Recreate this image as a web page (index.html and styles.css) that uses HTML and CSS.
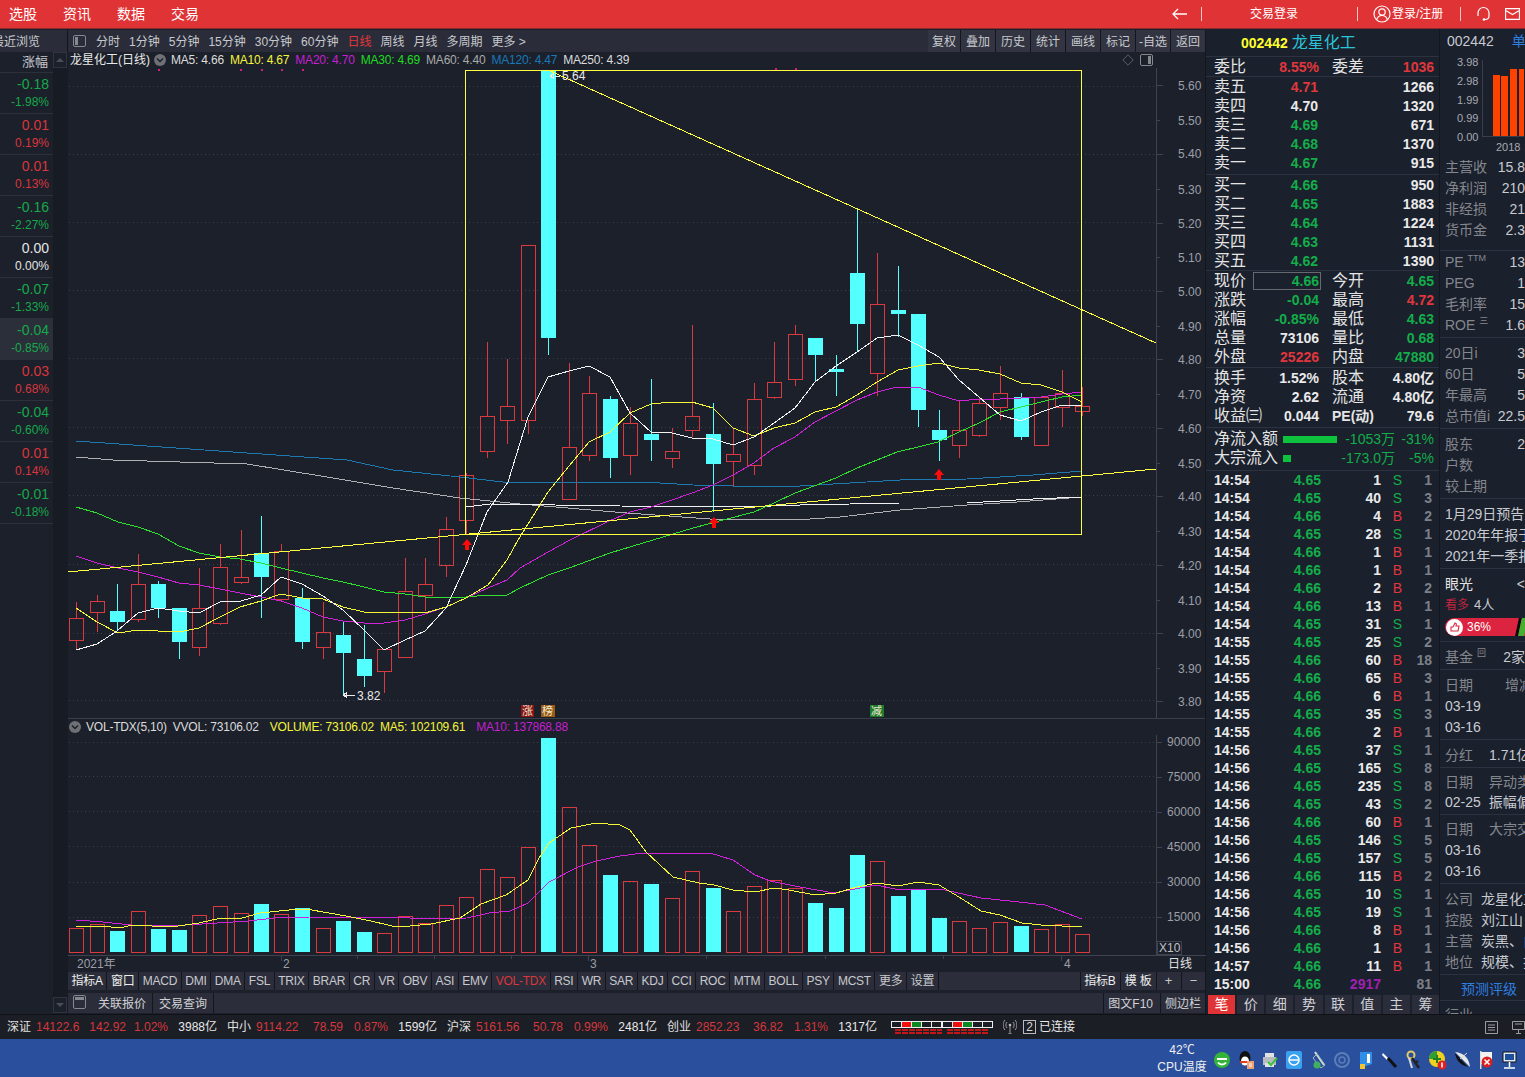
FILE: index.html
```html
<!DOCTYPE html>
<html lang="zh-CN">
<head>
<meta charset="utf-8">
<title>龙星化工</title>
<link rel="stylesheet" href="styles.css">
</head>
<body>
<header class="topbar">
  <nav class="topnav"><span>选股</span><span>资讯</span><span>数据</span><span>交易</span></nav>
  <div class="topright">
    <svg class="ico-back" viewBox="0 0 15 12"><path d="M15 6H1M6 1L1 6l5 5" fill="none" stroke="#fff" stroke-width="1.3"/></svg>
    <i class="tsep sep1"></i>
    <span class="trade">交易登录</span>
    <i class="tsep sep2"></i>
    <svg class="ico-user" viewBox="0 0 18 18"><circle cx="9" cy="9" r="8" fill="none" stroke="#fff" stroke-width="1.2"/><circle cx="9" cy="7" r="3.2" fill="none" stroke="#fff" stroke-width="1.2"/><path d="M3.5 15c1-3.5 3-4.500 5.500-4.500s4.500 1 5.500 4.500" fill="none" stroke="#fff" stroke-width="1.2"/></svg>
    <span class="login">登录/注册</span>
    <i class="tsep sep3"></i>
    <svg class="ico-head" viewBox="0 0 15 16"><path d="M2 10V7a5.500 5.500 0 0 1 11 0v3c0 2.500-2 3.500-4 3.500" fill="none" stroke="#fff" stroke-width="1.2"/><circle cx="8" cy="13.500" r="1.300" fill="#fff"/></svg>
    <svg class="ico-mail" viewBox="0 0 15 12"><path d="M.6.600h13.800v10.800H.6zM.6 2.500l6.900 4 6.900-4" fill="none" stroke="#fff" stroke-width="1.1"/></svg>
  </div>
</header>

<main class="workspace">
  <aside class="recent">
    <div class="recent-title"><span>最近浏览</span></div>
    <div class="recent-body">
      <div class="rank">
        <div class="rank-head">涨幅</div>
        <div class="rank-row down"><b>-0.18</b><small>-1.98%</small></div>
        <div class="rank-row up"><b>0.01</b><small>0.19%</small></div>
        <div class="rank-row up"><b>0.01</b><small>0.13%</small></div>
        <div class="rank-row down"><b>-0.16</b><small>-2.27%</small></div>
        <div class="rank-row flat"><b>0.00</b><small>0.00%</small></div>
        <div class="rank-row down"><b>-0.07</b><small>-1.33%</small></div>
        <div class="rank-row down current"><b>-0.04</b><small>-0.85%</small></div>
        <div class="rank-row up"><b>0.03</b><small>0.68%</small></div>
        <div class="rank-row down"><b>-0.04</b><small>-0.60%</small></div>
        <div class="rank-row up"><b>0.01</b><small>0.14%</small></div>
        <div class="rank-row down"><b>-0.01</b><small>-0.18%</small></div>
      </div>
      <div class="scroll">
        <div class="scroll-btn"><i class="tri-up"></i></div>
        <div class="scroll-btn"><i class="tri-down"></i></div>
      </div>
    </div>
  </aside>

  <section class="center">
    <div class="toolbar">
      <svg class="ico-toggle" viewBox="0 0 13 12"><rect x=".5" y=".5" width="12" height="11" rx="1.500" fill="none" stroke="#85888f"/><rect x="2" y="2" width="3" height="8" fill="#85888f"/></svg>
      <div class="periods">
        <span>分时</span><span>1分钟</span><span>5分钟</span><span>15分钟</span><span>30分钟</span><span>60分钟</span><span class="active">日线</span><span>周线</span><span>月线</span><span>多周期</span><span>更多 &gt;</span>
      </div>
      <div class="tools">
        <span>复权</span><span>叠加</span><span>历史</span><span>统计</span><span>画线</span><span>标记</span><span>-自选</span><span>返回</span>
      </div>
    </div>

    <div class="legend legend-main">
      <span class="stock-name">龙星化工(日线)</span>
      <svg class="chev" viewBox="0 0 12 12"><circle cx="6" cy="6" r="6" fill="#6e7075"/><path d="M3 4.500l3 3 3-3" fill="none" stroke="#1b202b" stroke-width="1.500"/></svg>
      <span class="c-w">MA5: 4.66</span><span class="c-y">MA10: 4.67</span><span class="c-m">MA20: 4.70</span><span class="c-g">MA30: 4.69</span><span class="c-s">MA60: 4.40</span><span class="c-b">MA120: 4.47</span><span class="c-w">MA250: 4.39</span>
      <span class="legend-icons">
        <svg class="ico-dia" viewBox="0 0 12 12"><path d="M6 .8L11.200 6 6 11.200.8 6z" fill="none" stroke="#5b5e66"/></svg>
        <svg class="ico-side" viewBox="0 0 13 12"><rect x=".5" y=".5" width="12" height="11" rx="1.500" fill="none" stroke="#85888f"/><rect x="8" y="2" width="3" height="8" fill="#85888f"/></svg>
      </span>
    </div>

    <svg class="pane-main" viewBox="68 68 1138 650" aria-label="K线图">
      <g class="grid">
        <path d="M69 86H1156M69 154H1156M69 222H1156M69 290H1156M69 358H1156M69 427H1156M69 495H1156M69 564H1156M69 633H1156M69 700H1156"/>
      </g>
      <path class="sep" d="M1156.500 52V718"/>
      <path class="tick" d="M1156 85h7M1156 120h4M1156 154h7M1156 189h4M1156 223h7M1156 257h4M1156 291h7M1156 326h4M1156 359h7M1156 394h4M1156 428h7M1156 463h4M1156 496h7M1156 531h4M1156 565h7M1156 600h4M1156 633h7M1156 668h4M1156 701h7"/>
      <g class="axis">
        <text x="1178" y="90">5.60</text><text x="1178" y="125">5.50</text><text x="1178" y="158">5.40</text><text x="1178" y="194">5.30</text><text x="1178" y="228">5.20</text><text x="1178" y="262">5.10</text><text x="1178" y="296">5.00</text><text x="1178" y="331">4.90</text><text x="1178" y="364">4.80</text><text x="1178" y="399">4.70</text><text x="1178" y="433">4.60</text><text x="1178" y="468">4.50</text><text x="1178" y="501">4.40</text><text x="1178" y="536">4.30</text><text x="1178" y="570">4.20</text><text x="1178" y="605">4.10</text><text x="1178" y="638">4.00</text><text x="1178" y="673">3.90</text><text x="1178" y="706">3.80</text>
      </g>
      <path class="dots" d="M158 69h2v2h-2zM240 69h2v2h-2zM261 69h2v2h-2zM281 69h2v2h-2zM302 69h2v2h-2zM775 68h2v2h-2zM795 68h2v2h-2z"/>
      <path class="cand-red" d="M76.500 602V618M76.500 640V650M69.500 618h14V640h-14zM97.500 595V601M97.500 612V632M90.500 601h14V612h-14zM138.500 554V584M138.500 619V622M131.500 584h14V619h-14zM199.500 568V608M199.500 647V656M192.500 608h14V647h-14zM220.500 544V567M220.500 623V625M213.500 567h14V623h-14zM241.500 530V577M241.500 582V584M234.500 577h14V582h-14zM281.500 544V551M281.500 599V602M274.500 551h14V599h-14zM323.500 602V632M323.500 647V659M316.500 632h14V647h-14zM384.500 671V693M377.500 649h14V671h-14zM405.500 558V591M398.500 591h14V657h-14zM425.500 558V584M425.500 595V611M418.500 584h14V595h-14zM446.500 517V529M446.500 565V577M439.500 529h14V565h-14zM466.500 473V475M466.500 520V534M459.500 475h14V520h-14zM487.500 342V416M487.500 451V458M480.500 416h14V451h-14zM507.500 359V406M507.500 420V444M500.500 406h14V420h-14zM528.500 420V434M521.500 245h14V420h-14zM569.500 363V447M562.500 447h14V499h-14zM589.500 376V393M589.500 455V461M582.500 393h14V455h-14zM630.500 407V423M630.500 455V475M623.500 423h14V455h-14zM672.500 428V451M672.500 458V468M665.500 451h14V458h-14zM692.500 325V416M692.500 430V437M685.500 416h14V430h-14zM733.500 428V454M733.500 461V487M726.500 454h14V461h-14zM754.500 383V399M754.500 465V475M747.500 399h14V465h-14zM774.500 342V382M774.500 397V399M767.500 382h14V397h-14zM795.500 325V334M795.500 379V386M788.500 334h14V379h-14zM877.500 253V304M877.500 373V396M870.500 304h14V373h-14zM959.500 401V430M959.500 445V458M952.500 430h14V445h-14zM979.500 397V403M979.500 435V437M972.500 403h14V435h-14zM1000.500 366V393M1000.500 407V420M993.500 393h14V407h-14zM1034.500 397h14V445h-14zM1062.500 370V393M1062.500 407V427M1055.500 393h14V407h-14zM1082.500 387V406M1082.500 411V416M1075.500 406h14V411h-14z"/>
      <path class="wick-cyan" d="M117.500 584V630M158.500 581V618M179.500 642V659M261.500 516V618M302.500 588V649M343.500 622V696M364.500 625V687M548.500 338V355M610.500 396V478M651.500 379V461M713.500 403V512M815.500 355V382M836.500 355V396M857.500 210V351M898.500 266V337M918.500 410V427M939.500 410V461M1021.500 393V440"/>
      <path class="body-cyan" d="M110 611h15v11h-15zM151 584h15v24h-15zM172 608h15v34h-15zM254 553h15v24h-15zM295 598h15v44h-15zM336 635h15v18h-15zM357 659h15v17h-15zM541 70h15v268h-15zM603 399h15v59h-15zM644 434h15v6h-15zM706 434h15v30h-15zM808 338h15v17h-15zM829 369h15v3h-15zM850 273h15v51h-15zM891 310h15v4h-15zM911 314h15v96h-15zM932 430h15v10h-15zM1014 397h15v40h-15z"/>
      <g class="lines">
        <polyline class="l-blue" points="76,441 347,460 393,470 460,477 503,482 600,482 660,483 693,485 733,486 800,486 900,480 967,479 1033,475 1082,471"/>
        <polyline class="l-grey" points="76,457 113,460 247,464 327,477 393,488 460,498 520,504 627,513 710,519 810,519 840,517 900,510 967,505 1017,502 1082,497"/>
        <polyline class="l-white" points="466,507 490,504 620,506 743,507 800,505 900,503 967,503 1033,499 1082,497"/>
        <polyline class="l-green" points="76,507 97,513 118,522 138,527 158,534 179,546 199,553 220,557 240,559 261,563 281,568 302,573 323,578 343,582 364,587 384,592 405,594 425,597 446,598 466,597 488,595 507,595 520,588 548,575 569,568 610,553 653,540 693,528 727,519 754,512 774,503 795,493 836,478 857,468 877,460 897,452 918,447 938,442 959,432 979,423 1000,412 1021,407 1041,402 1062,397 1082,395"/>
        <polyline class="l-mag" points="76,556 97,563 118,568 138,572 158,577 179,583 199,585 220,589 240,593 261,597 281,601 302,608 323,617 343,621 364,623 384,623 405,620 425,614 446,607 466,598 488,588 507,580 520,568 548,552 570,540 607,522 630,512 651,507 672,500 692,493 713,485 733,475 754,463 774,448 795,437 815,422 836,411 857,400 877,392 897,387 918,387 939,395 959,401 979,399 1000,399 1021,398 1041,397 1062,394 1082,392"/>
        <polyline class="l-yel" points="76,608 97,622 118,633 138,630 158,631 179,632 199,628 220,617 240,607 261,601 281,594 302,598 323,599 343,607 364,612 384,613 405,612 425,613 446,607 466,598 488,585 507,560 518,540 548,492 569,466 589,442 610,432 630,413 651,404 672,402 692,402 713,408 733,428 754,436 774,428 795,423 815,412 836,407 857,395 877,382 898,370 918,366 939,363 959,368 979,370 1000,374 1021,383 1041,385 1062,392 1082,402"/>
        <polyline class="l-white" points="76,650 97,644 117,631 138,613 158,608 179,611 199,613 220,602 241,601 261,595 281,577 302,584 323,596 343,610 364,630 384,650 405,640 425,631 446,608 466,565 487,512 508,482 528,417 548,377 569,371 589,366 610,377 630,413 651,432 672,433 692,438 713,439 733,445 754,437 774,423 795,408 815,382 836,366 857,352 877,338 898,335 918,345 939,357 959,380 979,397 1000,415 1021,421 1041,412 1062,405 1082,406"/>
        <path class="l-draw" d="M68 572L1156 469M548 70L1156 343M465.500 70.500H1081.500V534.500H465.500z"/>
      </g>
      <path class="arrow" d="M467 539l5 6h-3v5h-4v-5h-3zM714 517l5 6h-3v5h-4v-5h-3zM939 469l5 6h-3v5h-4v-5h-3z"/>
      <g class="marks">
        <path class="mark-line" d="M555 76h5M550 76l3-2v4zM343 695h12M343 695l3-2v4z"/>
        <text x="562" y="80">5.64</text>
        <text x="357" y="700">3.82</text>
      </g>
      <rect class="tag t-red" x="521" y="705" width="13" height="12"/><text class="tag-t" x="522" y="715">涨</text>
      <rect class="tag t-brown" x="541" y="705" width="14" height="12"/><text class="tag-t" x="542" y="715">榜</text>
      <rect class="tag t-green" x="870" y="705" width="14" height="12"/><text class="tag-t" x="871" y="715">减</text>
    </svg>

    <div class="legend legend-vol">
      <svg class="chev first" viewBox="0 0 12 12"><circle cx="6" cy="6" r="6" fill="#6e7075"/><path d="M3 4.500l3 3 3-3" fill="none" stroke="#1b202b" stroke-width="1.500"/></svg>
      <span class="c-w">VOL-TDX(5,10)</span><span class="c-w">VVOL: 73106.02</span><span class="c-y wide">VOLUME: 73106.02</span><span class="c-y">MA5: 102109.61</span><span class="c-m wide">MA10: 137868.88</span>
    </div>

    <svg class="pane-vol" viewBox="68 735 1138 236" aria-label="成交量图">
      <path class="grid-p" d="M69 742H1156M69 776H1156M69 811H1156M69 846H1156M69 882H1156M69 917H1156"/>
      <path class="sep" d="M1156.500 735V955M68 955.500H1206"/>
      <path class="tick" d="M1156 742h6M1156 777h6M1156 812h6M1156 847h6M1156 882h6M1156 917h6M281.500 955v6M357.500 955v4M434.500 955v4M511.500 955v4M588.500 955v6M706.500 955v4M825.500 955v4M943.500 955v4M1061.500 955v6"/>
      <g class="axis">
        <text x="1167" y="746">90000</text><text x="1167" y="781">75000</text><text x="1167" y="816">60000</text><text x="1167" y="851">45000</text><text x="1167" y="886">30000</text><text x="1167" y="921">15000</text>
        <text x="77" y="968">2021年</text><text x="283" y="968">2</text><text x="590" y="968">3</text><text x="1064" y="968">4</text>
        <text class="axis-w" x="1168" y="968">日线</text>
      </g>
      <rect class="x10" x="1157.500" y="941.500" width="24" height="13"/>
      <text class="axis-x" x="1159" y="952">X10</text>
      <path class="cand-red" d="M69.500 928h14V952h-14zM90.500 924h14V952h-14zM131.500 911h14V952h-14zM192.500 915h14V952h-14zM213.500 906h14V952h-14zM234.500 913h14V952h-14zM274.500 914h14V952h-14zM316.500 928h14V952h-14zM377.500 933h14V952h-14zM398.500 916h14V952h-14zM418.500 923h14V952h-14zM439.500 905h14V952h-14zM459.500 897h14V952h-14zM480.500 869h14V952h-14zM500.500 877h14V952h-14zM521.500 847h14V952h-14zM562.500 807h14V952h-14zM582.500 845h14V952h-14zM623.500 881h14V952h-14zM665.500 898h14V952h-14zM685.500 871h14V952h-14zM726.500 911h14V952h-14zM747.500 886h14V952h-14zM767.500 880h14V952h-14zM788.500 888h14V952h-14zM870.500 861h14V952h-14zM952.500 921h14V952h-14zM972.500 928h14V952h-14zM993.500 922h14V952h-14zM1034.500 929h14V952h-14zM1055.500 924h14V952h-14zM1075.500 934h14V952h-14z"/>
      <path class="body-cyan" d="M110 931h15V952h-15zM151 929h15V952h-15zM172 930h15V952h-15zM254 904h15V952h-15zM295 908h15V952h-15zM336 921h15V952h-15zM357 932h15V952h-15zM541 738h15V952h-15zM603 875h15V952h-15zM644 884h15V952h-15zM706 888h15V952h-15zM808 903h15V952h-15zM829 908h15V952h-15zM850 855h15V952h-15zM891 896h15V952h-15zM911 889h15V952h-15zM932 918h15V952h-15zM1014 926h15V952h-15z"/>
      <polyline class="l-mag" points="76,920 103,922 131,925 171,926 217,923 249,921 274,918 310,917 356,917 399,917 421,919 467,918 489,913 510,911 528,903 549,882 578,867 596,861 620,856 643,853 710,853 733,860 755,875 770,881 800,887 834,893 876,885 895,889 940,889 981,898 1019,902 1045,905 1082,919"/>
      <polyline class="l-yel" points="76,927 103,926 119,928 133,925 171,927 199,923 221,918 242,918 260,913 289,910 306,909 346,916 371,921 392,926 410,926 431,924 460,918 481,904 506,895 528,880 539,858 549,843 571,828 596,823 620,825 630,830 646,852 673,877 699,883 714,885 733,890 755,892 774,888 789,890 815,895 836,893 857,887 877,883 898,886 918,882 939,885 959,897 981,911 1000,915 1022,923 1041,925 1062,926 1082,927"/>
    </svg>

    <div class="ind-tabs">
      <span class="hl">指标A</span><span class="hl">窗口</span><span>MACD</span><span>DMI</span><span>DMA</span><span>FSL</span><span>TRIX</span><span>BRAR</span><span>CR</span><span>VR</span><span>OBV</span><span>ASI</span><span>EMV</span><span class="active">VOL-TDX</span><span>RSI</span><span>WR</span><span>SAR</span><span>KDJ</span><span>CCI</span><span>ROC</span><span>MTM</span><span>BOLL</span><span>PSY</span><span>MCST</span><span>更多</span><span>设置</span>
      <div class="ind-right"><span class="hl">指标B</span><span class="hl">模 板</span><span class="pm">+</span><span class="pm">−</span></div>
    </div>

    <div class="subtabs">
      <svg class="ico-toggle sm" viewBox="0 0 13 14"><rect x=".5" y=".5" width="12" height="13" rx="1.500" fill="none" stroke="#85888f"/><rect x="2" y="2" width="9" height="3" fill="#85888f"/></svg>
      <span class="sub">关联报价</span><span class="sub">交易查询</span>
      <div class="sub-right"><span class="sub">图文F10</span><span class="sub">侧边栏</span></div>
    </div>
  </section>

  <section class="quote">
    <div class="q-title"><b>002442</b><span>龙星化工</span></div>
    <div class="q-sec q-ratio">
      <div class="st"><span>委比</span><b class="r">8.55%</b><span class="l2">委差</span><b class="r">1036</b></div>
    </div>
    <div class="q-sec q-asks">
      <div class="bk"><span>卖五</span><b class="r">4.71</b><b>1266</b></div>
      <div class="bk"><span>卖四</span><b>4.70</b><b>1320</b></div>
      <div class="bk"><span>卖三</span><b class="g">4.69</b><b>671</b></div>
      <div class="bk"><span>卖二</span><b class="g">4.68</b><b>1370</b></div>
      <div class="bk"><span>卖一</span><b class="g">4.67</b><b>915</b></div>
    </div>
    <div class="q-sec">
      <div class="bk"><span>买一</span><b class="g">4.66</b><b>950</b></div>
      <div class="bk"><span>买二</span><b class="g">4.65</b><b>1883</b></div>
      <div class="bk"><span>买三</span><b class="g">4.64</b><b>1224</b></div>
      <div class="bk"><span>买四</span><b class="g">4.63</b><b>1131</b></div>
      <div class="bk"><span>买五</span><b class="g">4.62</b><b>1390</b></div>
    </div>
    <div class="q-sec q-stats">
      <div class="st"><span>现价</span><b class="g boxed">4.66</b><span class="l2">今开</span><b class="g">4.65</b></div>
      <div class="st"><span>涨跌</span><b class="g">-0.04</b><span class="l2">最高</span><b class="r">4.72</b></div>
      <div class="st"><span>涨幅</span><b class="g">-0.85%</b><span class="l2">最低</span><b class="g">4.63</b></div>
      <div class="st"><span>总量</span><b>73106</b><span class="l2">量比</span><b class="g">0.68</b></div>
      <div class="st"><span>外盘</span><b class="r">25226</b><span class="l2">内盘</span><b class="g">47880</b></div>
    </div>
    <div class="q-sec q-fund">
      <div class="st"><span>换手</span><b>1.52%</b><span class="l2">股本</span><b>4.80亿</b></div>
      <div class="st"><span>净资</span><b>2.62</b><span class="l2">流通</span><b>4.80亿</b></div>
      <div class="st"><span>收益㈢</span><b>0.044</b><span class="l2 pe">PE(动)</span><b>79.6</b></div>
    </div>
    <div class="q-sec q-flow">
      <div class="fl"><span>净流入额</span><i class="bar long"></i><em>-1053万</em><em>-31%</em></div>
      <div class="fl"><span>大宗流入</span><i class="bar short"></i><em>-173.0万</em><em>-5%</em></div>
    </div>
    <div class="ticks">
      <div class="tk"><b>14:54</b><b class="g">4.65</b><b>1</b><u class="g">S</u><s>1</s></div>
      <div class="tk"><b>14:54</b><b class="g">4.65</b><b>40</b><u class="g">S</u><s>3</s></div>
      <div class="tk"><b>14:54</b><b class="g">4.66</b><b>4</b><u class="r">B</u><s>2</s></div>
      <div class="tk"><b>14:54</b><b class="g">4.65</b><b>28</b><u class="g">S</u><s>1</s></div>
      <div class="tk"><b>14:54</b><b class="g">4.66</b><b>1</b><u class="r">B</u><s>1</s></div>
      <div class="tk"><b>14:54</b><b class="g">4.66</b><b>1</b><u class="r">B</u><s>1</s></div>
      <div class="tk"><b>14:54</b><b class="g">4.66</b><b>2</b><u class="r">B</u><s>2</s></div>
      <div class="tk"><b>14:54</b><b class="g">4.66</b><b>13</b><u class="r">B</u><s>1</s></div>
      <div class="tk"><b>14:54</b><b class="g">4.65</b><b>31</b><u class="g">S</u><s>1</s></div>
      <div class="tk"><b>14:55</b><b class="g">4.65</b><b>25</b><u class="g">S</u><s>2</s></div>
      <div class="tk"><b>14:55</b><b class="g">4.66</b><b>60</b><u class="r">B</u><s>18</s></div>
      <div class="tk"><b>14:55</b><b class="g">4.66</b><b>65</b><u class="r">B</u><s>3</s></div>
      <div class="tk"><b>14:55</b><b class="g">4.66</b><b>6</b><u class="r">B</u><s>1</s></div>
      <div class="tk"><b>14:55</b><b class="g">4.65</b><b>35</b><u class="g">S</u><s>3</s></div>
      <div class="tk"><b>14:55</b><b class="g">4.66</b><b>2</b><u class="r">B</u><s>1</s></div>
      <div class="tk"><b>14:56</b><b class="g">4.65</b><b>37</b><u class="g">S</u><s>1</s></div>
      <div class="tk"><b>14:56</b><b class="g">4.65</b><b>165</b><u class="g">S</u><s>8</s></div>
      <div class="tk"><b>14:56</b><b class="g">4.65</b><b>235</b><u class="g">S</u><s>8</s></div>
      <div class="tk"><b>14:56</b><b class="g">4.65</b><b>43</b><u class="g">S</u><s>2</s></div>
      <div class="tk"><b>14:56</b><b class="g">4.66</b><b>60</b><u class="r">B</u><s>1</s></div>
      <div class="tk"><b>14:56</b><b class="g">4.65</b><b>146</b><u class="g">S</u><s>5</s></div>
      <div class="tk"><b>14:56</b><b class="g">4.65</b><b>157</b><u class="g">S</u><s>5</s></div>
      <div class="tk"><b>14:56</b><b class="g">4.66</b><b>115</b><u class="r">B</u><s>2</s></div>
      <div class="tk"><b>14:56</b><b class="g">4.65</b><b>10</b><u class="g">S</u><s>1</s></div>
      <div class="tk"><b>14:56</b><b class="g">4.65</b><b>19</b><u class="g">S</u><s>1</s></div>
      <div class="tk"><b>14:56</b><b class="g">4.66</b><b>8</b><u class="r">B</u><s>1</s></div>
      <div class="tk"><b>14:56</b><b class="g">4.66</b><b>1</b><u class="r">B</u><s>1</s></div>
      <div class="tk"><b>14:57</b><b class="g">4.66</b><b>11</b><u class="r">B</u><s>1</s></div>
      <div class="tk"><b>15:00</b><b class="g">4.66</b><b class="p">2917</b><u></u><s>81</s></div>
    </div>
    <div class="q-tabs"><span class="on">笔</span><span>价</span><span>细</span><span>势</span><span>联</span><span>值</span><span>主</span><span>筹</span></div>
  </section>

  <aside class="f10">
    <div class="f-head"><span>002442</span><span class="blue">单</span></div>
    <svg class="mini" viewBox="0 0 84 104" aria-label="单季收益">
      <g class="mini-t">
        <text x="17" y="14">3.98</text><text x="17" y="33">2.98</text><text x="17" y="52">1.99</text><text x="17" y="70">0.99</text><text x="17" y="89">0.00</text>
        <text x="56" y="99">2018</text>
      </g>
      <path class="mini-axis" d="M42.500 8V84h42"/>
      <path class="mini-bar" d="M53 23h7v61h-7zM61 24h7v60h-7zM70 17h7v67h-7zM79 17h6v67h-6z"/>
    </svg>
    <div class="f-sec fs-a">
      <div class="kv"><span>主营收</span><em>15.8</em></div>
      <div class="kv"><span>净利润</span><em>210</em></div>
      <div class="kv"><span>非经损</span><em>21</em></div>
      <div class="kv"><span>货币金</span><em>2.3</em></div>
    </div>
    <div class="f-sec fs-b">
      <div class="kv"><span>PE <sup>TTM</sup></span><em>13</em></div>
      <div class="kv"><span>PEG</span><em>1</em></div>
      <div class="kv"><span>毛利率</span><em>15</em></div>
      <div class="kv"><span>ROE <sup>三</sup></span><em>1.6</em></div>
    </div>
    <div class="f-sec">
      <div class="kv"><span>20日i</span><em>3</em></div>
      <div class="kv"><span>60日</span><em>5</em></div>
      <div class="kv"><span>年最高</span><em>5</em></div>
      <div class="kv"><span>总市值i</span><em>22.5</em></div>
    </div>
    <div class="f-sec">
      <div class="kv"><span>股东</span><em>2</em></div>
      <div class="kv"><span>户数</span></div>
      <div class="kv"><span>较上期</span></div>
    </div>
    <div class="f-sec">
      <div class="kv"><em class="left">1月29日预告业绩</em></div>
      <div class="kv"><em class="left">2020年年报于</em></div>
      <div class="kv"><em class="left">2021年一季报</em></div>
    </div>
    <div class="f-sec fs-eye">
      <div class="kv"><em class="left eye">眼光</em><em>&lt;</em></div>
      <div class="kv"><span class="bull">看多</span><em class="left people">4人</em></div>
      <div class="eyebar">
        <svg class="thumb" viewBox="0 0 17 17"><circle cx="8.500" cy="8.500" r="8.500" fill="#fff"/><path d="M5 8h2l2-4c1.500 0 1.500 1.500 1 3h3l-1 5H5z" fill="none" stroke="#dc2440" stroke-width="1.100"/></svg>
        <span>36%</span><i class="slash"></i><i class="greenbar"></i>
      </div>
    </div>
    <div class="f-sec">
      <div class="kv"><span>基金 <sup>回</sup></span><em>2家</em></div>
    </div>
    <div class="f-sec">
      <div class="kv"><span>日期</span><span class="g32">增减</span></div>
      <div class="kv"><em class="left">03-19</em></div>
      <div class="kv"><em class="left">03-16</em></div>
    </div>
    <div class="f-sec">
      <div class="kv"><span>分红</span><em class="left g16">1.71亿</em></div>
    </div>
    <div class="f-sec fs-tight">
      <div class="kv"><span>日期</span><span class="g16">异动类</span></div>
      <div class="kv"><em class="left">02-25</em><em class="left g8">振幅偏离</em></div>
    </div>
    <div class="f-sec fs-short">
      <div class="kv"><span>日期</span><span class="g16">大宗交易</span></div>
      <div class="kv"><em class="left">03-16</em></div>
      <div class="kv"><em class="left">03-16</em></div>
    </div>
    <div class="f-sec">
      <div class="kv"><span>公司</span><em class="left g8">龙星化工</em></div>
      <div class="kv"><span>控股</span><em class="left g8">刘江山</em></div>
      <div class="kv"><span>主营</span><em class="left g8">炭黑、白</em></div>
      <div class="kv"><span>地位</span><em class="left g8">规模、技术</em></div>
    </div>
    <div class="f-sec fs-rate"><span class="blue">预测评级</span></div>
    <div class="fs-last"><span>行业</span></div>
  </aside>
</main>

<footer class="status">
  <div class="idx"><span>深证</span><b>14122.6</b><b class="n">142.92</b><b class="n">1.02%</b><span class="n">3988亿</span></div>
  <div class="idx"><span>中小</span><b>9114.22</b><b class="n">78.59</b><b class="n">0.87%</b><span class="n">1599亿</span></div>
  <div class="idx"><span>沪深</span><b>5161.56</b><b class="n">50.78</b><b class="n">0.99%</b><span class="n">2481亿</span></div>
  <div class="idx"><span>创业</span><b>2852.23</b><b class="n">36.82</b><b class="n">1.31%</b><span class="n">1317亿</span></div>
  <svg class="pulse" viewBox="0 0 102 13">
    <path class="p-cell" d="M.5.500h50v6H.500zM10.500.500v6M20.500.500v6M30.500.500v6M40.500.500v6M51.500.500h50v6h-50zM61.500.500v6M71.500.500v6M81.500.500v6M91.500.500v6"/>
    <path class="p-red" d="M11 1h9v5h-9zM62 1h9v5h-9z"/>
    <path class="p-grn" d="M21 1h9v5h-9zM72 1h9v5h-9z"/>
    <path class="p-dash" d="M4 8h6v2H4zM11 8h6v2h-6zM18 8h6v2h-6zM25 8h6v2h-6zM32 8h6v2h-6zM39 8h6v2h-6zM46 8h5v2h-5zM56 8h6v2h-6zM63 8h6v2h-6zM70 8h6v2h-6zM77 8h6v2h-6zM84 8h6v2h-6zM91 8h6v2h-6zM4 11h6v2H4zM11 11h6v2h-6zM18 11h6v2h-6zM25 11h6v2h-6zM32 11h6v2h-6zM39 11h6v2h-6zM46 11h5v2h-5zM56 11h6v2h-6zM63 11h6v2h-6zM70 11h6v2h-6zM77 11h6v2h-6zM84 11h6v2h-6zM91 11h6v2h-6z"/>
  </svg>
  <svg class="antenna" viewBox="0 0 14 14"><path d="M7 5v9M5 14h4M4 2C2.500 3.500 2.500 6.500 4 8M10 2c1.500 1.500 1.500 4.500 0 6M2 0C-.5 3-.5 7 2 10M12 0c2.500 3 2.500 7 0 10" fill="none" stroke="#9a9ca0"/><circle cx="7" cy="5" r="1.300" fill="#bbb"/></svg>
  <span class="linkno">2</span><span class="linked">已连接</span>
  <svg class="st-ico ico-a" viewBox="0 0 13 13"><path d="M.5.500h12v12H.500zM3 4h7M3 6.500h7M3 9h7" fill="none" stroke="#9a9ca0"/></svg>
  <svg class="st-ico ico-b" viewBox="0 0 13 13"><path d="M.5.500h12v8H.500zM4 12.500h5M6.500 9v3M3 3h7" fill="none" stroke="#9a9ca0"/></svg>
</footer>

<div class="taskbar">
  <div class="cpu"><span>42℃</span><span>CPU温度</span></div>
  <div class="tray">
    <svg viewBox="0 0 20 20"><circle cx="10" cy="10" r="8" fill="#35b33a"/><path d="M5 9h10M6 12.500c2 2.500 6 2.500 8 0" fill="none" stroke="#fff" stroke-width="2"/></svg>
    <svg viewBox="0 0 20 20"><ellipse cx="9" cy="8" rx="5.500" ry="7" fill="#111"/><ellipse cx="9" cy="11" rx="4" ry="4.500" fill="#fff"/><path d="M4 11h10v2H4z" fill="#e04020"/><path d="M11 11h7v8h-7z" fill="#f0a070"/><path d="M13 14h3M13 16h3" stroke="#fff"/></svg>
    <svg viewBox="0 0 20 20"><path d="M3 7h13v8H3z" fill="#b8bcc0"/><path d="M5 3h9v4H5zM5 13h9v4H5z" fill="#e0e2e4"/><path d="M8 12l3 3 6-7" fill="none" stroke="#3cc040" stroke-width="2"/></svg>
    <svg viewBox="0 0 20 20"><rect x="2" y="1" width="16" height="18" rx="2" fill="#3aa0f0"/><circle cx="10" cy="10" r="5" fill="none" stroke="#fff" stroke-width="1.500"/><path d="M6 10h8" stroke="#fff" stroke-width="1.500"/></svg>
    <svg viewBox="0 0 20 20"><path d="M7 2l9 13" stroke="#d8dde0" stroke-width="2"/><path d="M5 8l4-4 8 11-4 3z" fill="none" stroke="#a0c0b0"/><circle cx="9" cy="15" r="3.500" fill="#40b060"/></svg>
    <svg viewBox="0 0 20 20"><circle cx="10" cy="10" r="7" fill="none" stroke="#5b7db8" stroke-width="2"/><circle cx="10" cy="10" r="3" fill="none" stroke="#5b7db8" stroke-width="1.500"/></svg>
    <svg viewBox="0 0 20 20"><path d="M4 2h12v12L4 18z" fill="#2f8fe8"/><path d="M11 4h3v9h-3z" fill="#fff"/><path d="M4 14h5v5H4z" fill="#f4c430"/></svg>
    <svg viewBox="0 0 20 20"><path d="M3 3l5 5-1 2L2 5z" fill="#fff"/><path d="M8 8l8 9" stroke="#111" stroke-width="3"/></svg>
    <svg viewBox="0 0 20 20"><circle cx="7" cy="5" r="3.500" fill="none" stroke="#e4c860" stroke-width="2"/><path d="M8 8l7 10M11 13l3-2" stroke="#222" stroke-width="2.500"/><path d="M5 8l3 10" stroke="#d8d8d8" stroke-width="2"/></svg>
    <svg viewBox="0 0 20 20"><circle cx="9" cy="9" r="8" fill="#f0d020"/><path d="M9 1a8 8 0 0 0-8 8h8z" fill="#30a030"/><path d="M5 9h8M9 5v8" stroke="#208020" stroke-width="2"/><circle cx="14" cy="15" r="4.500" fill="#e02020"/><path d="M14 12.500v5" stroke="#fff" stroke-width="1.500"/></svg>
    <svg viewBox="0 0 20 20"><path d="M3 2c9 1 14 6 15 15z" fill="#e8e8e8"/><path d="M3 3c1 7 5 12 13 14z" fill="#111"/><path d="M8 9l7-6" stroke="#ddd"/></svg>
    <svg viewBox="0 0 20 20"><path d="M4 1h1.500v18H4z" fill="#ddd"/><path d="M5 2h11v12H5z" fill="#f2f2f2"/><circle cx="11" cy="12" r="5.500" fill="#d82020"/><path d="M8.500 9.500l5 5M13.500 9.500l-5 5" stroke="#fff" stroke-width="1.500"/></svg>
    <svg viewBox="0 0 20 20"><path d="M3 2h13v10H3z" fill="#dce8f4" stroke="#111"/><path d="M5 4h9v6H5z" fill="#1f4f9a"/><path d="M9.500 12v5M4 18h11" stroke="#fff" stroke-width="1.500"/></svg>
  </div>
</div>
</body>
</html>
```
FILE: styles.css
```css
* { box-sizing: border-box; }
html, body { margin: 0; padding: 0; }
body {
  width: 1525px; height: 1077px; overflow: hidden;
  background: #1b202b; color: #e8e8e8;
  font: 12px/1 "Liberation Sans", "Noto Sans CJK SC", sans-serif;
  display: flex; flex-direction: column;
}
svg { display: block; }
b, em, u, s, i { font-style: normal; text-decoration: none; }

/* top bar */
.topbar { height: 29px; flex: none; background: #e03335; display: flex; align-items: center; justify-content: space-between; color: #fff; border-bottom: 1px solid #8a2a30; }
.topnav { display: flex; gap: 26px; padding-left: 9px; font-size: 14px; }
.topright { display: flex; align-items: center; }
.ico-back { width: 15px; height: 12px; margin-right: 14px; }
.tsep { width: 1px; height: 14px; background: #f5c5c5; }
.trade { width: 155px; text-align: center; padding-right: 11px; }
.ico-user { width: 18px; height: 18px; margin: 0 1px 0 15px; }
.login { width: 53px; }
.sep3 { margin: 0 15px 0 15px; }
.ico-head { width: 15px; height: 16px; margin-right: 14px; }
.ico-mail { width: 15px; height: 12px; margin-right: 5px; }

/* workspace */
.workspace { height: 985px; flex: none; display: flex; overflow: hidden; background: #14161d; }

.recent { width: 68px; flex: none; padding-top: 1px; display: flex; flex-direction: column; background: #1b202b; }
.recent-title { height: 22px; line-height: 24px; background: #2a2d39; color: #c8c9ce; overflow: hidden; white-space: nowrap; border-right: 1px solid #14161d; }
.recent-title span { display: block; margin-left: -8px; }
.recent-body { flex: 1; display: flex; min-height: 0; }
.rank { width: 53px; flex: none; }
.rank-head { height: 21px; line-height: 20px; text-align: right; padding-right: 5px; font-size: 13px; color: #c6c7cc; border-bottom: 1px solid #2c303b; }
.rank-row { height: 41px; padding: 4px 4px 0 0; text-align: right; border-bottom: 1px solid #2c303b; display: flex; flex-direction: column; gap: 3px; }
.rank-row b { font-weight: 400; font-size: 14px; line-height: 15px; }
.rank-row small { font-size: 12px; line-height: 15px; }
.rank-row.down { color: #17a84a; }
.rank-row.up { color: #d9363b; }
.rank-row.flat { color: #e4e4e4; }
.rank-row.current { background: #2b2f3a; }
.scroll { width: 15px; flex: none; background: #171b24; display: flex; flex-direction: column; justify-content: space-between; padding-bottom: 1px; }
.scroll-btn { width: 14px; height: 16px; border: 1px solid #30343f; display: flex; align-items: center; justify-content: center; background: #1b202b; }
.tri-up { border: 4px solid transparent; border-top: 0; border-bottom: 4px solid #4a4d57; }
.tri-down { border: 4px solid transparent; border-bottom: 0; border-top: 4px solid #4a4d57; }

.center { width: 1138px; flex: none; display: flex; flex-direction: column; padding-top: 1px; background: #1b202b; border-right: 1px solid #14161d; }

.toolbar { height: 22px; flex: none; display: flex; align-items: center; background: #2a2d39; color: #c8c9ce; padding-left: 5px; }
.ico-toggle { width: 13px; height: 12px; flex: none; }
.periods { display: flex; gap: 9px; padding: 2px 0 0 10px; white-space: nowrap; }
.periods .active { color: #e0363b; }
.tools { margin-left: auto; display: flex; gap: 1px; height: 22px; background: #14161d; }
.tools span { width: 34px; background: #323541; text-align: center; line-height: 24px; white-space: nowrap; }
.tools span:first-child { width: 32px; }

.legend { height: 16px; flex: none; display: flex; align-items: center; gap: 6px; padding-left: 2px; white-space: nowrap; overflow: hidden; letter-spacing: -.2px; }
.stock-name { color: #e8e8e8; letter-spacing: 0; margin-right: -2px; }
.chev { width: 12px; height: 12px; flex: none; margin-right: -1px; }
.chev.first { margin: 0 -1px 0 0; }
.legend-icons { margin-left: auto; display: flex; align-items: center; gap: 6px; padding-right: 52px; }
.ico-dia { width: 12px; height: 12px; }
.ico-side { width: 13px; height: 12px; }
.c-w { color: #dcdcdc; }
.c-y { color: #f5f53c; }
.c-m { color: #c51fd1; }
.c-g { color: #20dc20; }
.c-s { color: #a9a9a9; }
.c-b { color: #1a78b8; }

.legend-vol { height: 17px; border-top: 1px solid #3a3e4a; padding-left: 1px; }
.legend-vol .wide { margin-left: 5px; }

.pane-main { width: 1138px; height: 650px; flex: none; }
.pane-vol { width: 1138px; height: 236px; flex: none; }

.grid path, .grid-p { fill: none; stroke: #3b404b; stroke-dasharray: 1 3; shape-rendering: crispEdges; }
.sep { stroke: #3f434f; fill: none; shape-rendering: crispEdges; }
.tick { stroke: #3f434f; fill: none; shape-rendering: crispEdges; }
.axis text { font-size: 12px; fill: #9d9fa6; }
.axis .axis-w { fill: #e0e0e0; }
.axis-x { font-size: 12px; fill: #c0c1c6; }
.x10 { fill: none; stroke: #3f434f; shape-rendering: crispEdges; }

.dots { fill: #d02080; }
.cand-red { fill: none; stroke: #d93a40; stroke-width: 1; shape-rendering: crispEdges; }
.wick-cyan { fill: none; stroke: #54ffff; stroke-width: 1; shape-rendering: crispEdges; }
.body-cyan { fill: #54ffff; shape-rendering: crispEdges; }
.lines polyline, .pane-vol polyline { fill: none; stroke-width: 1; shape-rendering: crispEdges; }
.l-white { stroke: #f2f2f2; }
.l-yel { stroke: #f7f73a; }
.l-mag { stroke: #d022d8; }
.l-green { stroke: #2fe02f; }
.l-blue { stroke: #1d78b0; }
.l-grey { stroke: #b0b0b4; }
.l-draw { fill: none; stroke: #ffff40; shape-rendering: crispEdges; }
.arrow { fill: #ff0a0a; }
.marks text { font-size: 12px; fill: #eaeaea; }
.mark-line { stroke: #eaeaea; fill: none; shape-rendering: crispEdges; }
.t-red { fill: #8a1414; }
.t-brown { fill: #9a5a14; }
.t-green { fill: #1f7a2c; }
.tag-t { font-size: 11px; fill: #ece8d0; }

.ind-tabs { height: 18px; flex: none; margin-top: 1px; background: #14161d; display: flex; gap: 1px; color: #c8c9ce; white-space: nowrap; letter-spacing: -.25px; }
.ind-tabs span { padding: 0 3.600px; background: #2b2e3a; line-height: 18px; }
.ind-tabs .active { color: #d9363b; }
.ind-tabs .hl { color: #eee; }
.ind-right { flex: 1; display: flex; justify-content: flex-end; gap: 1px; background: #2b2e3a; }
.ind-right span { background: #2b2e3a; border-left: 1px solid #14161d; }
.ind-right .pm { width: 24px; text-align: center; font-size: 13px; padding: 0; }

.subtabs { height: 20px; flex: none; margin: 3px 0 1px; background: #2b2e3a; display: flex; align-items: stretch; padding-left: 5px; }
.ico-toggle.sm { height: 14px; margin: 2px 6px 0 0; }
.sub { padding: 0 6px; line-height: 22px; border-right: 1px solid #14161d; color: #d0d1d6; white-space: nowrap; }
.sub-right { margin-left: auto; display: flex; }
.sub-right .sub { padding: 0 4px; border-right: 0; border-left: 1px solid #14161d; }
.sub-right .sub:first-child { padding-right: 7px; }

/* quote panel */
.quote { width: 234px; flex: none; background: #1a202c; padding-top: 1px; display: flex; flex-direction: column; border-right: 1px solid #14161d; overflow: hidden; }
.quote b { font-weight: 700; font-size: 14px; color: #eaeaea; text-align: right; }
.quote .r { color: #e0373c; }
.quote .g { color: #13ad4a; }
.quote .p { color: #a020b0; }
.q-title { height: 26px; display: flex; align-items: center; padding-left: 35px; gap: 4px; }
.q-title b { color: #ffff30; }
.q-title span { font-size: 16px; color: #29c4d8; letter-spacing: 0; }
.q-sec { border-top: 1px solid #2d3240; padding: 0 5px 0 8px; }
.q-ratio { height: 20px; }
.q-ratio .st { height: 19px; }
.q-asks { padding-bottom: 2px; }
.q-stats { padding-bottom: 1px; }
.q-fund { padding-bottom: 2px; }
.q-flow { padding: 1.500px 5px 2.500px 8px; }
.bk { height: 19px; display: grid; grid-template-columns: 40px 64px 1fr; align-items: center; }
.st { height: 19px; display: grid; grid-template-columns: 40px 65px 1fr auto; align-items: center; white-space: nowrap; }
.bk span, .st span, .fl span { font-size: 16px; color: #e4e4e4; white-space: nowrap; }
.st .l2 { padding-left: 13px; }
.st .pe { font-size: 14px; font-weight: 700; }
.boxed { border: 1px solid #666a70; margin: 0 -2px 0 -1px; padding-right: 1px; height: 18px; line-height: 16px; }
.fl { height: 19px; display: grid; grid-template-columns: 69px 54px 1fr 39px; align-items: center; }
.fl em { font-size: 14px; color: #13ad4a; text-align: right; white-space: nowrap; }
.bar { display: block; height: 7px; background: #0ec23e; }
.bar.long { width: 54px; }
.bar.short { width: 8px; }
.ticks { border-top: 1px solid #2d3240; padding: 0 5px 0 8px; height: 523px; flex: none; }
.tk { height: 18px; display: grid; grid-template-columns: 60px 47px 60px 21px 1fr; align-items: center; }
.tk b:first-child { text-align: left; }
.tk u { font-size: 14px; font-weight: 400; text-align: right; }
.tk s { font-size: 14px; color: #7d8088; text-align: right; font-weight: 700; padding-right: 2px; }
.q-tabs { flex: 1; margin-top: 2px; display: flex; gap: 2px; padding-left: 2px; }
.q-tabs span { flex: 1; background: #2b2e3a; color: #d0d1d6; font-size: 14px; text-align: center; line-height: 18px; }
.q-tabs .on { background: #e03335; color: #fff; }

/* f10 side */
.f10 { flex: 1; min-width: 0; background: #1a202c; padding-top: 1px; overflow: hidden; white-space: nowrap; font-size: 14px; }
.f-head { height: 22px; display: flex; align-items: center; padding-left: 7px; gap: 18px; color: #c8cad0; }
.f-head .blue { color: #2f7fe0; }
.blue { color: #2f7fe0; }
.mini { width: 84px; height: 104px; }
.mini-t text { font-size: 11px; fill: #a8aab0; }
.mini-axis { fill: none; stroke: #3a3e4a; shape-rendering: crispEdges; }
.mini-bar { fill: #ff4200; }
.f-sec { padding: 4px 0 2px 5px; border-bottom: 1px solid #2d3240; }
.fs-a { padding-top: 0; padding-bottom: 10px; }
.fs-b { padding-top: 0; }
.fs-eye { padding-bottom: 6px; }
.fs-tight .kv { height: 20px; }
.fs-short { padding-top: 3px; }
.kv { height: 21px; display: flex; align-items: center; }
.kv span { color: #85878e; }
.kv em { margin-left: auto; color: #c8cbd2; }
.kv em.left { margin-left: 0; }
.kv em.left.g8 { margin-left: 8px; }
.kv em.left.g16, .kv .g16 { margin-left: 16px; }
.kv .g32 { margin-left: 32px; }
.kv .eye { color: #e4e4e4; }
.kv .bull { color: #c0263f; font-size: 12px; }
.kv em.people { margin-left: 5px; font-size: 13px; }
sup { font-size: 9px; line-height: 0; }
.eyebar { height: 18px; margin: 3px 0 -1px 0; background: #dc2440; border-radius: 9px 0 0 9px; display: flex; align-items: center; gap: 4px; position: relative; color: #fff; font-size: 12px; width: 80px; overflow: hidden; }
.thumb { width: 17px; height: 17px; flex: none; margin-left: 1px; }
.slash { position: absolute; left: 72px; top: 0; width: 3px; height: 18px; background: #0a0a0a; transform: skewX(-12deg); }
.greenbar { position: absolute; left: 75px; top: 0; width: 6px; height: 18px; background: #48b030; transform: skewX(-12deg); }
.fs-rate { padding: 5px 0 2px 21px; height: 26px; line-height: 19px; }
.fs-last { padding: 7px 0 0 5px; color: #85878e; }

/* status */
.status { height: 25px; flex: none; background: #1c1e25; display: flex; align-items: center; padding-left: 7px; white-space: nowrap; border-top: 1px solid #101116; }
.idx { width: 220px; flex: none; display: grid; grid-template-columns: 29px 46px 41px 45px 49px; color: #e0e0e0; }
.idx:first-child { grid-template-columns: 29px 46px 44px 42px 49px; }
.idx b { font-weight: 400; color: #d5373c; }
.idx .n { text-align: right; }
.idx span.n { color: #e8e8e8; }
.pulse { width: 102px; height: 13px; margin-left: 4px; flex: none; }
.p-cell { fill: none; stroke: #eee; shape-rendering: crispEdges; }
.p-red { fill: #f01010; }
.p-grn { fill: #0a8a20; }
.p-dash { fill: #c01818; }
.antenna { width: 14px; height: 14px; margin-left: 10px; flex: none; }
.linkno { width: 13px; height: 14px; border: 1px solid #b8bac0; text-align: center; line-height: 12px; margin-left: 6px; color: #d8d8d8; }
.linked { margin-left: 3px; }
.st-ico { width: 13px; height: 13px; flex: none; }
.ico-a { margin-left: auto; }
.ico-b { margin-left: 14px; }

/* taskbar */
.taskbar { height: 38px; flex: none; background: #2a4f9c; display: flex; justify-content: flex-end; align-items: center; padding-right: 5px; color: #f0f0f0; }
.cpu { display: flex; flex-direction: column; align-items: center; gap: 5px; width: 50px; margin-right: 5px; }
.tray { display: flex; gap: 4px; padding-top: 4px; }
.tray svg { width: 20px; height: 20px; flex: none; }
```
